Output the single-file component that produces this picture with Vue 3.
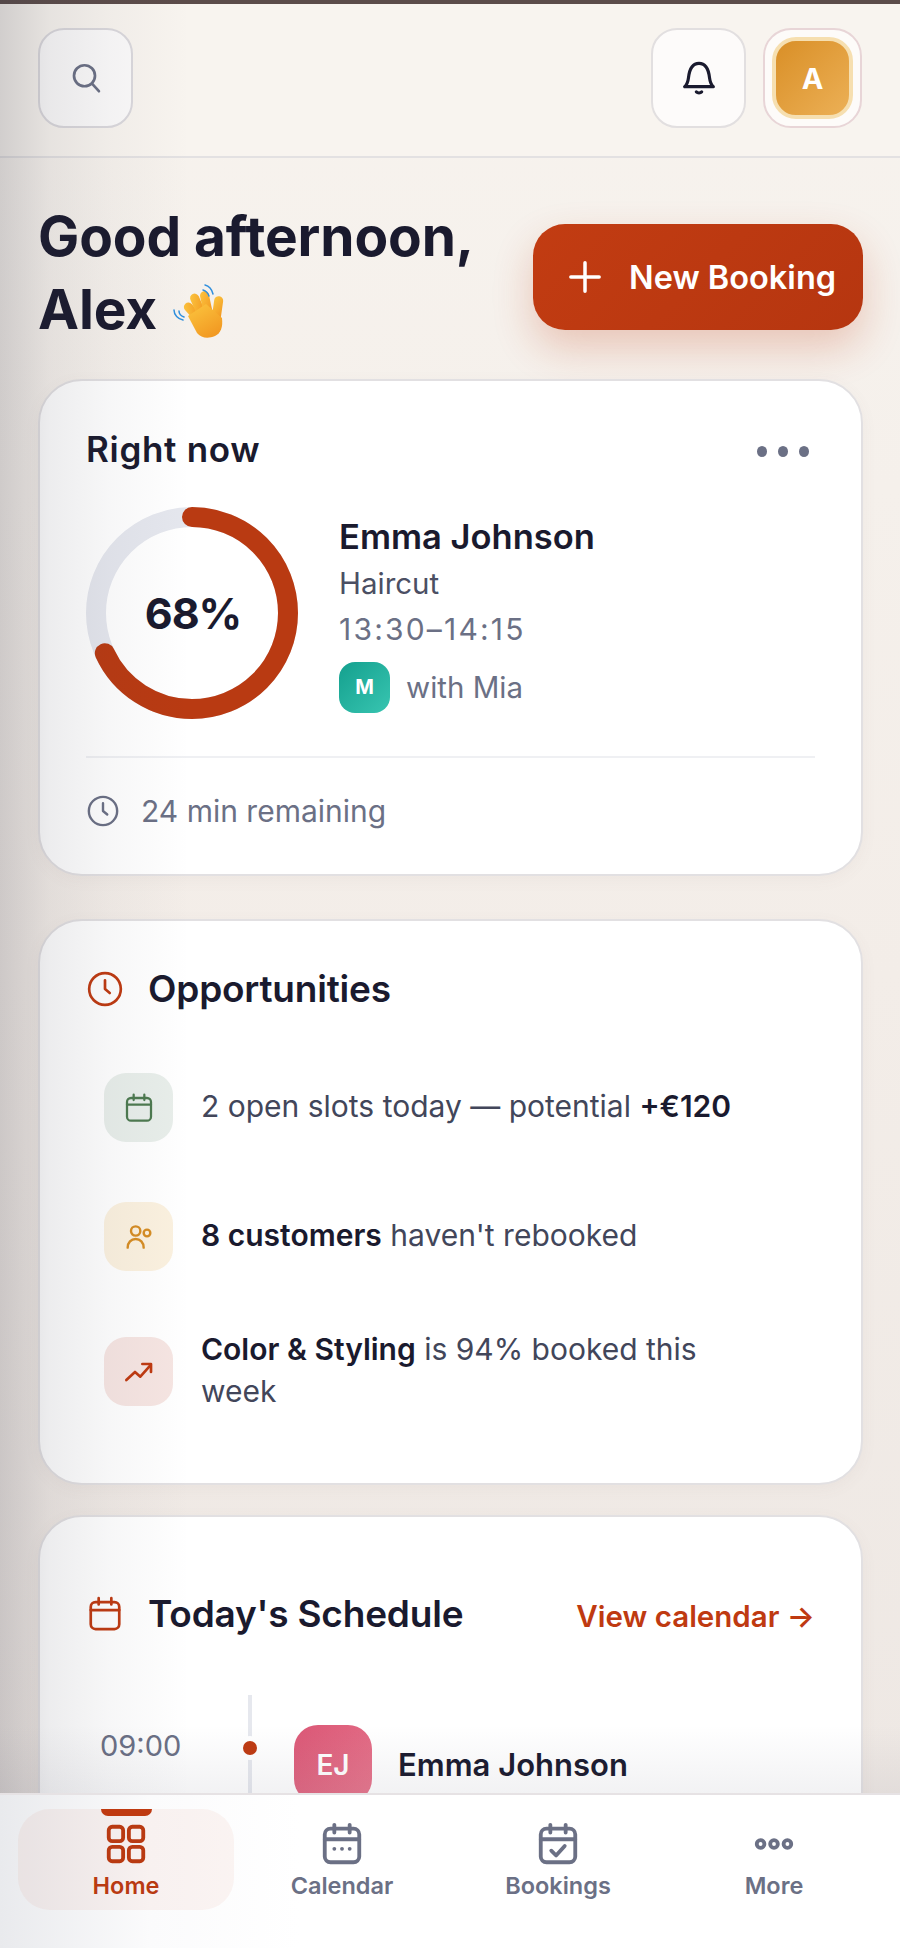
<template>
  <div class="page">
    <div class="status-strip"></div>

    <header class="topbar">
      <button class="icon-btn search-btn">
        <svg width="36" height="36" viewBox="0 0 24 24" fill="none" stroke="#6b7085" stroke-width="1.800" stroke-linecap="round">
          <circle cx="11" cy="10.500" r="7" />
          <path d="M16 15.800l4.600 5" />
        </svg>
      </button>
      <div class="topbar-right">
        <button class="icon-btn bell-btn">
          <svg width="40" height="40" viewBox="0 0 24 24" fill="none" stroke="#1a1a2e" stroke-width="1.900" stroke-linecap="round" stroke-linejoin="round">
            <path d="M3.400 17.200h17.200c-1.500-1.200-2-3-2.300-5.400C17.800 7.200 16 3.200 12 3.200S6.200 7.200 5.700 11.800c-.3 2.400-.8 4.200-2.300 5.400z" />
            <path d="M10.400 20.300c.8.800 2.400.8 3.200 0" />
          </svg>
        </button>
        <div class="profile-btn">
          <div class="profile-avatar">A</div>
        </div>
      </div>
    </header>

    <main class="content">
      <section class="greeting">
        <h1>Good afternoon,<br />Alex
          <svg class="wave" width="60" height="60" viewBox="0 0 60 60" fill="none">
            <defs>
              <linearGradient id="handFill" x1="0" y1="0" x2="0.6" y2="1">
                <stop offset="0" stop-color="#fcc63f" />
                <stop offset="1" stop-color="#f29a23" />
              </linearGradient>
            </defs>
            <g fill="url(#handFill)">
              <rect x="22" y="18" width="9" height="23" rx="4.500" transform="rotate(-42 26 30)" />
              <rect x="27" y="10" width="9" height="26" rx="4.500" transform="rotate(-24 31 24)" />
              <rect x="35" y="8" width="9" height="26" rx="4.500" transform="rotate(-12 39 22)" />
              <rect x="46" y="13" width="9" height="26" rx="4.500" transform="rotate(8 50 26)" />
              <path d="M21 33l18-12 16 14c1 9-1 15-7 18-7 3-14 2-18-3z" />
            </g>
            <g stroke="#2f8fdd" stroke-width="1.500" stroke-linecap="round">
              <path d="M38 2c4 1 7 5 8 9" />
              <path d="M36 7c3 1 5 3 6 6" />
              <path d="M7 27c0 5 4 9 9 10" />
              <path d="M12 28c0 3 2 5 5 6" />
            </g>
          </svg>
        </h1>
        <button class="new-booking">
          <svg width="40" height="40" viewBox="0 0 24 24" fill="none" stroke="#fff" stroke-width="2.100" stroke-linecap="round">
            <path d="M12 3.500v17M3.500 12h17" />
          </svg>
          New Booking
        </button>
      </section>

      <section class="card now-card">
        <div class="now-head">
          <h2>Right now</h2>
          <div class="dots"><i></i><i></i><i></i></div>
        </div>
        <div class="now-body">
          <div class="ring">
            <svg width="212" height="212" viewBox="0 0 212 212" fill="none">
              <circle cx="106" cy="106" r="96" stroke="#e5e7ee" stroke-width="20" />
              <circle
                cx="106"
                cy="106"
                r="96"
                stroke="#b93a12"
                stroke-width="20"
                stroke-linecap="round"
                :stroke-dasharray="ringDash"
                transform="rotate(-90 106 106)"
              />
            </svg>
            <span class="ring-label">{{ progress }}%</span>
          </div>
          <div class="now-info">
            <div class="now-name">Emma Johnson</div>
            <div class="now-service">Haircut</div>
            <div class="now-time">13:30–14:15</div>
            <div class="now-staff">
              <span class="staff-avatar">M</span>
              with Mia
            </div>
          </div>
        </div>
        <div class="now-foot">
          <svg width="34" height="34" viewBox="0 0 24 24" fill="none" stroke="#6b7085" stroke-width="1.700" stroke-linecap="round" stroke-linejoin="round">
            <circle cx="12" cy="12" r="10" />
            <path d="M12 6.500V12l3 2.500" />
          </svg>
          24 min remaining
        </div>
      </section>

      <section class="card opp-card">
        <div class="section-head">
          <svg width="38" height="38" viewBox="0 0 24 24" fill="none" stroke="#bf3a11" stroke-width="1.700" stroke-linecap="round" stroke-linejoin="round">
            <circle cx="12" cy="12" r="10" />
            <path d="M12 6.500V12l3 2.500" />
          </svg>
          <h2>Opportunities</h2>
        </div>
        <div class="opp-list">
          <div class="opp-row">
            <div class="opp-icon green">
              <svg width="32" height="32" viewBox="0 0 24 24" fill="none" stroke="#4d7a50" stroke-width="1.700" stroke-linecap="round" stroke-linejoin="round">
                <rect x="3" y="4.500" width="18" height="17" rx="3" />
                <path d="M3 9.500h18M8 2v4M16 2v4" />
              </svg>
            </div>
            <p>2 open slots today — potential <b>+€120</b></p>
          </div>
          <div class="opp-row">
            <div class="opp-icon amber">
              <svg width="32" height="32" viewBox="0 0 24 24" fill="none" stroke="#d68d24" stroke-width="1.800" stroke-linecap="round" stroke-linejoin="round">
                <circle cx="9.500" cy="7.500" r="3.500" />
                <circle cx="18" cy="9" r="2.500" />
                <path d="M3.500 20c0-3.800 2.600-6.500 6-6.500s6 2.700 6 6.500" />
              </svg>
            </div>
            <p><b>8 customers</b> haven't rebooked</p>
          </div>
          <div class="opp-row">
            <div class="opp-icon red">
              <svg width="32" height="32" viewBox="0 0 24 24" fill="none" stroke="#bf3a11" stroke-width="2" stroke-linecap="round" stroke-linejoin="round">
                <path d="M2.500 18l6.500-6 4 3.500L20.500 7" />
                <path d="M14.500 6h6.500v6" />
              </svg>
            </div>
            <p><b>Color &amp; Styling</b> is 94% booked this week</p>
          </div>
        </div>
      </section>

      <section class="card schedule-card">
        <div class="section-head">
          <svg width="38" height="38" viewBox="0 0 24 24" fill="none" stroke="#bf3a11" stroke-width="1.700" stroke-linecap="round" stroke-linejoin="round">
            <rect x="3" y="4.500" width="18" height="17" rx="3" />
            <path d="M3 9.500h18M8 2v4M16 2v4" />
          </svg>
          <h2>Today's Schedule</h2>
          <a class="view-link">View calendar →</a>
        </div>
        <div class="timeline-row">
          <span class="slot-time">09:00</span>
          <div class="slot-rail"><span class="slot-dot"></span></div>
          <div class="slot-avatar">EJ</div>
          <span class="slot-name">Emma Johnson</span>
        </div>
      </section>
    </main>

    <div class="side-shade"></div>
    <div class="nav-shade"></div>

    <nav class="tabbar">
      <div v-for="tab in tabs" :key="tab.label" class="tab" :class="{ active: tab.active }">
        <span v-if="tab.active" class="tab-marker"></span>
        <svg width="46" height="46" viewBox="0 0 24 24" fill="none" stroke="currentColor" stroke-width="2" stroke-linecap="round" stroke-linejoin="round">
          <template v-if="tab.icon === 'home'">
            <rect x="3" y="3" width="7.500" height="7.500" rx="1.800" />
            <rect x="13.500" y="3" width="7.500" height="7.500" rx="1.800" />
            <rect x="3" y="13.500" width="7.500" height="7.500" rx="1.800" />
            <rect x="13.500" y="13.500" width="7.500" height="7.500" rx="1.800" />
          </template>
          <template v-else-if="tab.icon === 'calendar'">
            <rect x="3" y="4" width="18" height="17.500" rx="3" />
            <path d="M3 9.500h18M8 2v4M16 2v4" />
            <path d="M8 14.500h.01M12 14.500h.01M16 14.500h.01" stroke-width="2" />
          </template>
          <template v-else-if="tab.icon === 'bookings'">
            <rect x="3" y="4" width="18" height="17.500" rx="3" />
            <path d="M3 9.500h18M8 2v4M16 2v4" />
            <path d="M8.500 15.500l2.500 2.500 4.500-5" />
          </template>
          <template v-else>
            <circle cx="5" cy="12" r="2" />
            <circle cx="12" cy="12" r="2" />
            <circle cx="19" cy="12" r="2" />
          </template>
        </svg>
        <span class="tab-label">{{ tab.label }}</span>
      </div>
    </nav>
  </div>
</template>

<script setup>
import { computed, ref } from 'vue'

const progress = ref(68)

const ringDash = computed(() => {
  const len = 2 * Math.PI * 96
  return `${(len * progress.value) / 100} ${len}`
})

const tabs = [
  { label: 'Home', icon: 'home', active: true },
  { label: 'Calendar', icon: 'calendar' },
  { label: 'Bookings', icon: 'bookings' },
  { label: 'More', icon: 'more' }
]
</script>

<style>
html,
body {
  margin: 0;
  background: #f5efe9;
}
</style>

<style scoped>
.page {
  position: relative;
  width: 900px;
  height: 1948px;
  overflow: hidden;
  background: linear-gradient(180deg, #f7f3ee 0%, #f3ede8 50%, #ede7e3 100%);
  font-family: Inter, "Liberation Sans", sans-serif;
  color: #1a1a2e;
}

.status-strip {
  height: 4px;
  background: #5c4c4a;
}

.topbar {
  height: 152px;
  padding: 0 38px;
  display: flex;
  align-items: flex-start;
  justify-content: space-between;
  border-bottom: 2px solid #e3e1e2;
  background: #f8f4ef;
  box-sizing: content-box;
}

.icon-btn {
  margin-top: 24px;
  width: 95px;
  height: 100px;
  border-radius: 26px;
  border: 2px solid #dad8dc;
  display: flex;
  align-items: center;
  justify-content: center;
  padding: 0;
  box-sizing: border-box;
}

.search-btn {
  background: #fbfafa;
}

.bell-btn {
  background: #fdfbfa;
  border-color: #e2dfe0;
}

.topbar-right {
  display: flex;
  gap: 17px;
}

.profile-btn {
  margin-top: 24px;
  width: 99px;
  height: 100px;
  border-radius: 28px;
  border: 2px solid #e8d5d7;
  background: #fdfbf9;
  display: flex;
  align-items: center;
  justify-content: center;
  box-sizing: border-box;
}

.profile-avatar {
  width: 73px;
  height: 74px;
  border-radius: 24px;
  border: 4px solid #f6dfb0;
  background: linear-gradient(135deg, #d98f27, #ecb056);
  color: #fff;
  font-size: 29px;
  font-weight: 700;
  display: flex;
  align-items: center;
  justify-content: center;
}

.content {
  padding: 42px 37px 0 38px;
  display: flex;
  flex-direction: column;
}

.greeting {
  display: flex;
  align-items: center;
  justify-content: space-between;
  margin-bottom: 33px;
}

.greeting h1 {
  margin: 0;
  font-size: 55px;
  line-height: 73px;
  font-weight: 700;
  letter-spacing: -0.1px;
}

.wave {
  vertical-align: -14px;
  margin-left: -3px;
}

.new-booking {
  width: 330px;
  height: 106px;
  margin-top: 8px;
  border: none;
  border-radius: 32px;
  background: linear-gradient(135deg, #c23c12, #b63610);
  box-shadow: 0 18px 40px rgba(191, 58, 17, 0.24);
  color: #fff;
  font-family: inherit;
  font-size: 32.5px;
  font-weight: 600;
  display: flex;
  align-items: center;
  gap: 24px;
  padding: 0 0 0 32px;
}

.card {
  background: #fff;
  border: 2px solid #e2e0e2;
  border-radius: 44px;
  box-sizing: border-box;
  box-shadow: 0 4px 16px rgba(120, 100, 100, 0.05);
  padding: 0 46px;
}

.now-card {
  height: 497px;
  padding-top: 46px;
  margin-bottom: 43px;
}

.now-head {
  display: flex;
  align-items: center;
  justify-content: space-between;
  padding-right: 6px;
}

.now-head h2 {
  margin: 0;
  font-size: 35px;
  line-height: 44px;
  font-weight: 600;
  letter-spacing: 0.7px;
}

.dots {
  display: flex;
  gap: 11px;
  margin-top: 4px;
}

.dots i {
  width: 10px;
  height: 11px;
  border-radius: 50%;
  background: #6b7085;
}

.now-body {
  display: flex;
  align-items: center;
  gap: 41px;
  margin-top: 36px;
  padding-bottom: 37px;
  border-bottom: 2px solid #eff0f3;
}

.ring {
  position: relative;
  width: 212px;
  height: 212px;
  flex: none;
}

.ring-label {
  position: absolute;
  inset: 0;
  display: flex;
  align-items: center;
  justify-content: center;
  padding-left: 2px;
  font-size: 43px;
  font-weight: 700;
  letter-spacing: -1px;
}

.now-info {
  display: flex;
  flex-direction: column;
}

.now-name {
  font-size: 34.5px;
  line-height: 46px;
  font-weight: 600;
}

.now-service {
  font-size: 29.5px;
  line-height: 46px;
  color: #4b4f63;
}

.now-time {
  font-size: 30px;
  line-height: 46px;
  letter-spacing: 2.2px;
  color: #6b7085;
}

.now-staff {
  display: flex;
  align-items: center;
  gap: 16px;
  margin-top: 10px;
  font-size: 29.5px;
  color: #6b7085;
}

.staff-avatar {
  width: 51px;
  height: 51px;
  border-radius: 16px;
  background: linear-gradient(135deg, #14a08e, #38c5b1);
  color: #fff;
  font-size: 20px;
  font-weight: 700;
  display: flex;
  align-items: center;
  justify-content: center;
}

.now-foot {
  display: flex;
  align-items: center;
  gap: 21px;
  margin-top: 35px;
  font-size: 30px;
  line-height: 36px;
  color: #6b7085;
}

.section-head {
  display: flex;
  align-items: center;
  gap: 24px;
}

.section-head h2 {
  margin: 0;
  font-size: 37px;
  line-height: 44px;
  font-weight: 600;
  letter-spacing: -0.2px;
}

.opp-card {
  height: 566px;
  padding-top: 46px;
  margin-bottom: 30px;
}

.opp-list {
  margin-top: 42px;
  display: flex;
  flex-direction: column;
  gap: 20px;
}

.opp-row {
  display: flex;
  align-items: center;
  gap: 28px;
  padding: 20px 70px 20px 18px;
}

.opp-row p {
  margin: -3px 0 0;
  font-size: 30px;
  line-height: 42px;
  color: #42465a;
}

.opp-row b {
  font-weight: 600;
  color: #1a1a2e;
  white-space: nowrap;
}

.opp-icon {
  width: 69px;
  height: 69px;
  flex: none;
  border-radius: 22px;
  display: flex;
  align-items: center;
  justify-content: center;
}

.opp-icon.green {
  background: #e8eeea;
}

.opp-icon.amber {
  background: #fbf1df;
}

.opp-icon.red {
  background: #f6e5e2;
}

.schedule-card {
  height: 500px;
  padding-top: 75px;
}

.view-link {
  margin-left: auto;
  margin-top: 3px;
  color: #bf3a11;
  font-size: 29.5px;
  font-weight: 600;
}

.timeline-row {
  display: flex;
  align-items: flex-start;
  margin-top: 59px;
  height: 160px;
}

.slot-time {
  margin-left: 14px;
  margin-top: 29px;
  width: 130px;
  font-size: 29px;
  line-height: 44px;
  color: #6b7085;
}

.slot-rail {
  position: relative;
  width: 4px;
  height: 160px;
  margin-left: 18px;
  background: #e6e8ee;
}

.slot-dot {
  position: absolute;
  left: -5px;
  top: 46px;
  width: 14px;
  height: 14px;
  border-radius: 50%;
  background: #bf3a11;
  box-shadow: 0 0 0 5px #fff;
}

.slot-avatar {
  margin-left: 42px;
  margin-top: 30px;
  width: 78px;
  height: 78px;
  border-radius: 24px;
  background: linear-gradient(135deg, #db5776, #e8798f);
  color: #fff;
  font-size: 28px;
  font-weight: 600;
  display: flex;
  align-items: center;
  justify-content: center;
  padding-top: 2px;
  box-sizing: border-box;
}

.slot-name {
  margin-left: 26px;
  margin-top: 48px;
  font-size: 31px;
  line-height: 44px;
  font-weight: 600;
}

.side-shade {
  position: absolute;
  inset: 0;
  pointer-events: none;
  background: linear-gradient(90deg, rgba(55, 55, 70, 0.2) 0, rgba(55, 55, 70, 0.09) 50px, rgba(55, 55, 70, 0.04) 110px, rgba(55, 55, 70, 0) 190px);
}

.nav-shade {
  position: absolute;
  left: 0;
  right: 0;
  top: 1725px;
  height: 68px;
  pointer-events: none;
  background: linear-gradient(180deg, rgba(90, 90, 110, 0), rgba(90, 90, 110, 0.08));
}

.tabbar {
  position: absolute;
  left: 0;
  right: 0;
  bottom: 0;
  height: 155px;
  padding: 14px 18px 0;
  display: grid;
  grid-template-columns: repeat(4, 1fr);
  align-items: start;
  box-sizing: border-box;
  border-top: 2px solid #e6e2e4;
  background: linear-gradient(90deg, #e9eaed 0, #fbfbfc 150px, #fff 300px);
}

.tab {
  position: relative;
  height: 101px;
  display: flex;
  flex-direction: column;
  align-items: center;
  padding-top: 12px;
  box-sizing: border-box;
  color: #6b7085;
}

.tab.active {
  color: #b93a12;
  border-radius: 32px;
  background: rgba(191, 58, 17, 0.05);
}

.tab-marker {
  position: absolute;
  top: 0;
  left: 50%;
  width: 51px;
  height: 7px;
  margin-left: -25px;
  border-radius: 0 0 8px 8px;
  background: #bf3a11;
}

.tab-label {
  margin-top: 5px;
  font-size: 23.5px;
  line-height: 28px;
  font-weight: 600;
}
</style>
